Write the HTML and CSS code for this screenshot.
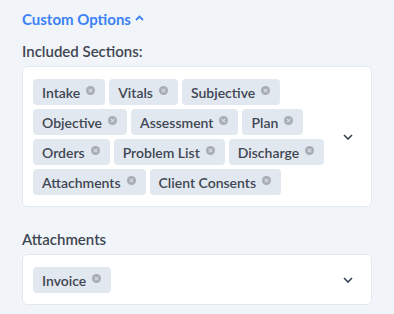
FILE: index.html
```html
<!DOCTYPE html>
<html>
<head>
<meta charset="utf-8">
<link rel="stylesheet" href="styles.css">
</head>
<body>
<div class="panel">
  <div class="toggle">Custom Options <svg class="caret" width="9" height="6" viewBox="0 0 9 6"><path d="M1 5 L4.5 1.5 L8 5" fill="none" stroke="#3b82f6" stroke-width="1.8"/></svg></div>
  <div class="label">Included Sections:</div>
  <div class="select">
    <div class="tags">
      <span class="tag">Intake<i class="x"></i></span>
      <span class="tag">Vitals<i class="x"></i></span>
      <span class="tag">Subjective<i class="x"></i></span>
      <span class="tag">Objective<i class="x"></i></span>
      <span class="tag">Assessment<i class="x"></i></span>
      <span class="tag">Plan<i class="x"></i></span>
      <span class="tag">Orders<i class="x"></i></span>
      <span class="tag">Problem List<i class="x"></i></span>
      <span class="tag">Discharge<i class="x"></i></span>
      <span class="tag">Attachments<i class="x"></i></span>
      <span class="tag">Client Consents<i class="x"></i></span>
    </div>
    <svg class="chev" width="10" height="6" viewBox="0 0 10 6"><path d="M1 1 L5 5 L9 1" fill="none" stroke="#374151" stroke-width="1.6"/></svg>
  </div>
  <div class="label label2">Attachments</div>
  <div class="select">
    <div class="tags">
      <span class="tag">Invoice<i class="x"></i></span>
    </div>
    <svg class="chev" width="10" height="6" viewBox="0 0 10 6"><path d="M1 1 L5 5 L9 1" fill="none" stroke="#374151" stroke-width="1.6"/></svg>
  </div>
</div>
</body>
</html>
```
FILE: styles.css
```css
html, body { margin: 0; padding: 0; }
body {
  background: #f1f5f9;
  font-family: Lato, "Noto Sans", sans-serif;
  color: #374151;
  width: 394px;
  height: 314px;
  overflow: hidden;
}
.panel {
  padding: 9px 22px 0 22px;
}
.toggle {
  color: #3b82f6;
  font-weight: 700;
  font-size: 15px;
  line-height: 20px;
  display: flex;
  align-items: center;
  gap: 4px;
}
.caret { margin-top: -3px; }
.label {
  font-size: 15px;
  font-weight: 600;
  margin-top: 12px;
  line-height: 20px;
  color: #3f4653;
}
.label2 { margin-top: 22px; }
.select {
  margin-top: 5px;
  background: #fff;
  border: 1px solid #e2e8f0;
  border-radius: 5px;
  display: flex;
  align-items: center;
  padding: 12px 18px 11px 10px;
  gap: 10px;
}
.tags {
  flex: 1;
  display: flex;
  flex-wrap: wrap;
  gap: 4px;
}
.tag {
  display: inline-flex;
  align-items: center;
  background: #e2e8f0;
  border-radius: 4px;
  height: 26px;
  padding: 0 10px 0 9px;
  font-size: 14px;
  font-weight: 600;
  color: #3f4653;
}
.x {
  display: inline-block;
  width: 9px;
  height: 9px;
  border-radius: 50%;
  background: #a8adb5;
  margin-left: 6px;
  margin-top: -4px;
  position: relative;
}
.x::before, .x::after {
  content: "";
  position: absolute;
  left: 2px;
  top: 4px;
  width: 5px;
  height: 1px;
  background: #e2e8f0;
  transform: rotate(45deg);
}
.x::after { transform: rotate(-45deg); }
.chev { flex: none; }
```
